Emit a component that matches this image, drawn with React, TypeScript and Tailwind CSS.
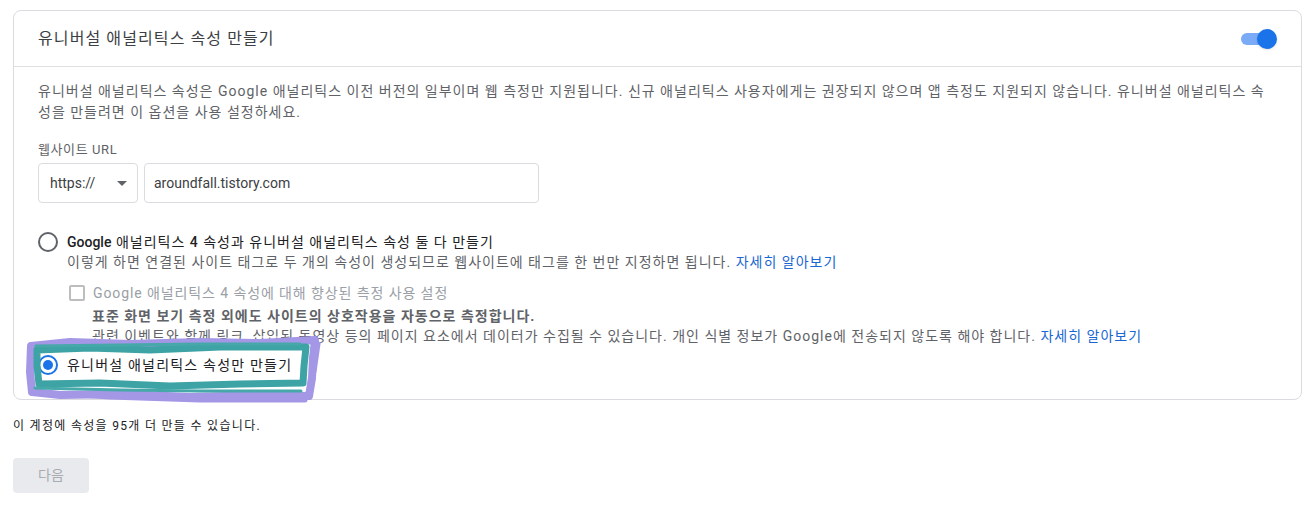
import React from "react";

const font = "font-['Roboto','Noto_Sans_CJK_KR',sans-serif]";

function Radio({ checked }: { checked?: boolean }) {
  return (
    <span
      className={`flex h-[20px] w-[20px] shrink-0 items-center justify-center rounded-full border-2 ${
        checked ? "border-[#1a73e8]" : "border-[#5f6368]"
      }`}
    >
      {checked && <span className="h-[10px] w-[10px] rounded-full bg-[#1a73e8]" />}
    </span>
  );
}

function Scribble() {
  // hand-drawn marker highlight over the last radio option
  return (
    <svg
      className="pointer-events-none absolute left-[20px] top-[330px] h-[80px] w-[310px]"
      viewBox="20 330 310 80"
      fill="none"
    >
      <path
        d="M31 346 L70 342 L130 344 L200 342 L260 343 L315 340 L313 358 L312 378 L309 396 L260 395 L190 397 L120 394 L60 395 L32 392 L30 372 Z"
        stroke="#a397e6"
        strokeWidth="8"
        strokeLinejoin="round"
      />
      <path
        d="M34 392 L110 397 L200 400 L305 400 M312 342 L318 344 L314 372"
        stroke="#a397e6"
        strokeWidth="5"
        strokeLinecap="round"
      />
      <path
        d="M37 350 L90 348 L150 350 L220 347 L306 347 L304 366 L303 383 L240 384 L170 386 L100 383 L39 384 L37 366 Z"
        stroke="#3ea3a5"
        strokeWidth="7"
        strokeLinejoin="round"
      />
      <path
        d="M35 388 L120 390 L200 391 L301 391 M36 346 L120 345 L200 344 L300 344"
        stroke="#46a8a9"
        strokeWidth="3"
        strokeLinecap="round"
      />
    </svg>
  );
}

export default function App() {
  return (
    <div className={`relative min-h-[506px] bg-white pl-[13px] pr-[2px] pt-[10px] ${font}`}>
      {/* Property card */}
      <div className="rounded-lg border border-[#dadce0] bg-white">
        <div className="flex h-[56px] items-center justify-between border-b border-[#e0e0e0] pl-[24px] pr-[24px]">
          <h2 className="text-[16px] tracking-[1.1px] text-[#3c4043]">유니버설 애널리틱스 속성 만들기</h2>
          <div className="relative h-[20px] w-[36px]">
            <span className="absolute left-0 top-[4px] h-[12px] w-[30px] rounded-full bg-[#7baaf7]" />
            <span className="absolute right-0 top-0 h-[20px] w-[20px] rounded-full bg-[#1a73e8] shadow-sm" />
          </div>
        </div>

        <div className="px-[24px] pb-[24px] pt-[14px] tracking-[1px]">
          <p className="text-[14px] leading-[21px] text-[#5f6368]">
            유니버설 애널리틱스 속성은 Google 애널리틱스 이전 버전의 일부이며 웹 측정만 지원됩니다. 신규 애널리틱스 사용자에게는 권장되지 않으며 앱 측정도 지원되지 않습니다. 유니버설 애널리틱스 속성을 만들려면 이 옵션을 사용 설정하세요.
          </p>

          <div className="mt-[17px] text-[13px] leading-[20px] tracking-[0.6px] text-[#5f6368]">웹사이트 URL</div>
          <div className="mt-[3px] flex gap-[6px] tracking-normal">
            <div className="flex h-[40px] w-[100px] items-center justify-between rounded border border-[#dadce0] pl-[11px] pr-[10px] text-[14px] text-[#3c4043]">
              <span>https://</span>
              <span className="h-0 w-0 border-x-[5px] border-t-[5px] border-x-transparent border-t-[#5f6368]" />
            </div>
            <div className="flex h-[40px] w-[395px] items-center rounded border border-[#dadce0] px-[9px] text-[14px] text-[#3c4043]">
              aroundfall.tistory.com
            </div>
          </div>

          <div className="mt-[29px] flex items-start gap-[9px]">
            <Radio />
            <div>
              <div className="text-[14px] leading-[20px] text-[#202124]">
                <span className="font-medium tracking-normal">Google</span> 애널리틱스 <span className="font-medium">4</span> 속성과 유니버설 애널리틱스 속성 둘 다 만들기
              </div>
              <div className="text-[14px] leading-[21px] text-[#5f6368]">
                이렇게 하면 연결된 사이트 태그로 두 개의 속성이 생성되므로 웹사이트에 태그를 한 번만 지정하면 됩니다.{" "}
                <a className="text-[#1967d2]">자세히 알아보기</a>
              </div>
              <div className="mt-[10px] flex items-center gap-[8px] pl-[2px]">
                <span className="h-[16px] w-[16px] rounded-[2px] border-2 border-[#bdbdbd]" />
                <span className="text-[14px] leading-[20px] tracking-[0.9px] text-[#9aa0a6]">Google 애널리틱스 4 속성에 대해 향상된 측정 사용 설정</span>
              </div>
              <div className="mt-[3px] pl-[25px] text-[14px] font-bold leading-[20px] text-[#5f6368]">
                표준 화면 보기 측정 외에도 사이트의 상호작용을 자동으로 측정합니다.
              </div>
              <div className="pl-[25px] text-[14px] leading-[21px] text-[#5f6368]">
                관련 이벤트와 함께 링크, 삽입된 동영상 등의 페이지 요소에서 데이터가 수집될 수 있습니다. 개인 식별 정보가 Google에 전송되지 않도록 해야 합니다.{" "}
                <a className="text-[#1967d2]">자세히 알아보기</a>
              </div>
            </div>
          </div>

          <div className="mt-[8px] flex items-center gap-[9px]">
            <Radio checked />
            <span className="text-[14px] leading-[20px] tracking-[1.2px] text-[#202124]">유니버설 애널리틱스 속성만 만들기</span>
          </div>
        </div>
      </div>

      <p className="mt-[17px] text-[12px] leading-[18px] tracking-[1.3px] text-[#202124]">이 계정에 속성을 95개 더 만들 수 있습니다.</p>

      <button className="mt-[23px] h-[35px] w-[76px] rounded bg-[#e8eaed] text-[14px] text-[#a8abaf]">다음</button>

      <Scribble />
    </div>
  );
}
